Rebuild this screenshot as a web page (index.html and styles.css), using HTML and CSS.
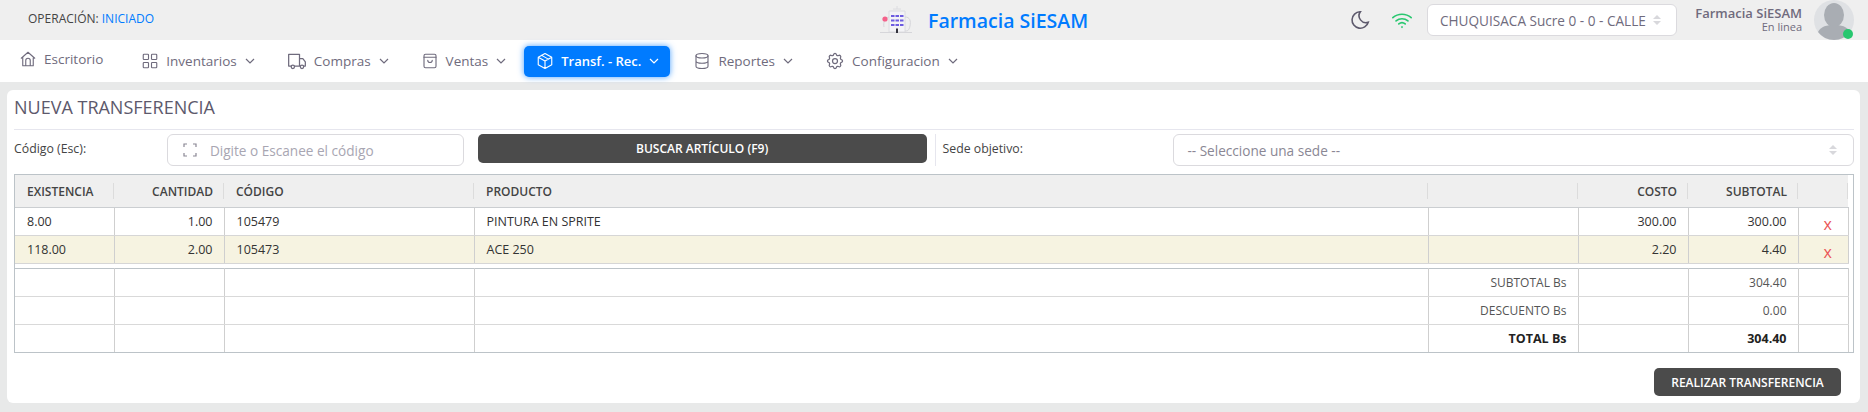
FILE: index.html
```html
<!DOCTYPE html>
<html lang="es">
<head>
    <meta charset="UTF-8">
    <title>Nueva Transferencia</title>
    <link rel="stylesheet" href="styles.css">
</head>
<body>
    <header class="topbar">
        <div class="operation">OPERACIÓN: <span class="operation-state">INICIADO</span></div>
        <div class="brand">
            <svg class="brand-logo" viewBox="0 0 32 28" width="32" height="28">
                <path d="M13 3h8M17 0v3M9 5h16v21H9z" fill="#f3f3f6" stroke="#dcdce0" stroke-width="1"/>
                <path d="M25 11c5 0 6 4 5 9s-3 5-5 5M9 11c-4 1-6 5-5 10" fill="none" stroke="#d6d6da" stroke-width="1"/>
                <path d="M0 26.500h32" stroke="#d6d6da" stroke-width="1"/>
                <circle cx="5" cy="13" r="2.600" fill="#f4618a"/>
                <g fill="#6d5ce0">
                    <rect x="11" y="9" width="3.500" height="2"/><rect x="15.500" y="9" width="3.500" height="2"/><rect x="20" y="9" width="3.500" height="2"/>
                    <rect x="11" y="13.500" width="3.500" height="2"/><rect x="15.500" y="13.500" width="3.500" height="2"/><rect x="20" y="13.500" width="3.500" height="2"/>
                    <rect x="11" y="18" width="3.500" height="2"/><rect x="15.500" y="18" width="3.500" height="2"/><rect x="20" y="18" width="3.500" height="2"/>
                </g>
                <rect x="16" y="22.500" width="2" height="4.500" fill="#33333d"/>
            </svg>
            <span class="brand-name">Farmacia SiESAM</span>
        </div>
        <div class="top-actions">
            <svg class="moon" viewBox="0 0 24 24" width="22" height="22"><path d="M12 3c.1 0 .3 0 .4 0a7.500 7.500 0 0 0 8.600 11.400A9 9 0 1 1 12 3z"/></svg>
            <svg class="wifi" viewBox="0 0 24 24" width="22" height="22">
                <path d="M2 9.500a15 15 0 0 1 20 0M5.500 13a10 10 0 0 1 13 0M8.500 16.200a5.500 5.500 0 0 1 7 0"/>
                <path d="M12 19.500v.5"/>
            </svg>
            <div class="branch-select">
                <span>CHUQUISACA Sucre 0 - 0 - CALLE</span>
                <svg class="updown" viewBox="0 0 10 12" width="10" height="12"><path d="M5 1l4 4H1zM5 11L1 7h8z"/></svg>
            </div>
            <div class="user">
                <div class="user-name">Farmacia SiESAM</div>
                <div class="user-state">En linea</div>
            </div>
            <div class="avatar">
                <svg viewBox="0 0 40 40" width="40" height="40">
                    <circle cx="20" cy="20" r="20" fill="#dfe1e4"/>
                    <ellipse cx="20" cy="15" rx="10" ry="12" fill="#a9adb3"/>
                    <path d="M4 32c3-6 9-7 16-7s13 1 16 7a20 20 0 0 1-32 0z" fill="#a9adb3"/>
                </svg>
                <span class="avatar-dot"></span>
            </div>
        </div>
    </header>

    <nav class="navbar">
        <a class="nav-item nav-home">
            <svg class="nav-icon" viewBox="0 0 24 24" width="18" height="18"><path d="M3 11l9-8 9 8M5 9v12h14V9M9 21v-7a3 3 0 0 1 6 0v7"/></svg>
            Escritorio
        </a>
        <a class="nav-item">
            <svg class="nav-icon" viewBox="0 0 24 24" width="18" height="18"><rect x="3" y="3" width="7" height="7" rx="1"/><rect x="14" y="3" width="7" height="7" rx="1"/><rect x="3" y="14" width="7" height="7" rx="1"/><rect x="14" y="14" width="7" height="7" rx="1"/></svg>
            Inventarios
            <svg class="chevron" viewBox="0 0 12 12" width="12" height="12"><path d="M2 4l4 4 4-4"/></svg>
        </a>
        <a class="nav-item">
            <svg class="nav-icon" viewBox="0 0 24 24" width="20" height="20"><path d="M5 18H2V4h13v14H9M15 9h4l3 4v5h-2M15 18h1"/><circle cx="7" cy="19" r="2"/><circle cx="18" cy="19" r="2"/></svg>
            Compras
            <svg class="chevron" viewBox="0 0 12 12" width="12" height="12"><path d="M2 4l4 4 4-4"/></svg>
        </a>
        <a class="nav-item">
            <svg class="nav-icon" viewBox="0 0 24 24" width="18" height="18"><rect x="4" y="3" width="16" height="18" rx="2"/><path d="M4 7h16M9 11a3 3 0 0 0 6 0"/></svg>
            Ventas
            <svg class="chevron" viewBox="0 0 12 12" width="12" height="12"><path d="M2 4l4 4 4-4"/></svg>
        </a>
        <a class="nav-item nav-active">
            <svg class="nav-icon" viewBox="0 0 24 24" width="18" height="18"><path d="M12 2l9 5v10l-9 5-9-5V7zM3 7l9 5 9-5M12 12v10M7.500 4.500l9 5"/></svg>
            Transf. - Rec.
            <svg class="chevron" viewBox="0 0 12 12" width="12" height="12"><path d="M2 4l4 4 4-4"/></svg>
        </a>
        <a class="nav-item">
            <svg class="nav-icon" viewBox="0 0 24 24" width="18" height="18"><ellipse cx="12" cy="5" rx="8" ry="3"/><path d="M4 5v14c0 1.700 3.600 3 8 3s8-1.300 8-3V5M4 12c0 1.700 3.600 3 8 3s8-1.300 8-3"/></svg>
            Reportes
            <svg class="chevron" viewBox="0 0 12 12" width="12" height="12"><path d="M2 4l4 4 4-4"/></svg>
        </a>
        <a class="nav-item">
            <svg class="nav-icon" viewBox="0 0 24 24" width="20" height="20"><circle cx="12" cy="12" r="3"/><path d="M10.300 4.300c.4-1.800 3-1.800 3.400 0a1.700 1.700 0 0 0 2.600 1.100c1.500-.9 3.300.8 2.400 2.400a1.700 1.700 0 0 0 1 2.500c1.800.4 1.800 3 0 3.400a1.700 1.700 0 0 0-1 2.600c.9 1.500-.9 3.300-2.400 2.400a1.700 1.700 0 0 0-2.600 1c-.4 1.800-3 1.800-3.400 0a1.700 1.700 0 0 0-2.600-1c-1.500.9-3.300-.9-2.400-2.400a1.700 1.700 0 0 0-1-2.600c-1.800-.4-1.800-3 0-3.400a1.700 1.700 0 0 0 1-2.500c-.9-1.600.9-3.300 2.400-2.400a1.700 1.700 0 0 0 2.600-1.100z"/></svg>
            Configuracion
            <svg class="chevron" viewBox="0 0 12 12" width="12" height="12"><path d="M2 4l4 4 4-4"/></svg>
        </a>
    </nav>

    <main class="card">
        <h1 class="card-title">NUEVA TRANSFERENCIA</h1>
        <div class="search-row">
            <label class="field-label code-label">Código (Esc):</label>
            <div class="code-input">
                <svg class="scan" viewBox="0 0 14 14" width="14" height="14"><path d="M1 4V1h3M10 1h3v3M13 10v3h-3M4 13H1v-3"/></svg>
                <span>Digite o Escanee el código</span>
            </div>
            <button class="btn-dark btn-search">BUSCAR ARTÍCULO (F9)</button>
            <label class="field-label sede-label">Sede objetivo:</label>
            <div class="sede-select">
                <span>-- Seleccione una sede --</span>
                <svg class="updown" viewBox="0 0 10 12" width="10" height="12"><path d="M5 1l4 4H1zM5 11L1 7h8z"/></svg>
            </div>
        </div>

        <div class="table-box">
            <table class="grid grid-items">
                <colgroup>
                    <col class="c-stock"><col class="c-qty"><col class="c-code"><col class="c-name"><col class="c-blank"><col class="c-cost"><col class="c-sub"><col class="c-del">
                </colgroup>
                <thead>
                    <tr>
                        <th>EXISTENCIA</th>
                        <th class="num">CANTIDAD</th>
                        <th>CÓDIGO</th>
                        <th>PRODUCTO</th>
                        <th></th>
                        <th class="num">COSTO</th>
                        <th class="num">SUBTOTAL</th>
                        <th></th>
                    </tr>
                </thead>
                <tbody>
                    <tr>
                        <td>8.00</td>
                        <td class="num">1.00</td>
                        <td>105479</td>
                        <td>PINTURA EN SPRITE</td>
                        <td></td>
                        <td class="num">300.00</td>
                        <td class="num">300.00</td>
                        <td class="del">x</td>
                    </tr>
                    <tr class="row-picked">
                        <td>118.00</td>
                        <td class="num">2.00</td>
                        <td>105473</td>
                        <td>ACE 250</td>
                        <td></td>
                        <td class="num">2.20</td>
                        <td class="num">4.40</td>
                        <td class="del">x</td>
                    </tr>
                </tbody>
            </table>
            <table class="grid grid-totals">
                <colgroup>
                    <col class="c-stock"><col class="c-qty"><col class="c-code"><col class="c-name"><col class="c-blank"><col class="c-cost"><col class="c-sub"><col class="c-del">
                </colgroup>
                <tbody>
                    <tr>
                        <td></td><td></td><td></td><td></td>
                        <td class="num">SUBTOTAL Bs</td>
                        <td></td>
                        <td class="num">304.40</td>
                        <td></td>
                    </tr>
                    <tr>
                        <td></td><td></td><td></td><td></td>
                        <td class="num">DESCUENTO Bs</td>
                        <td></td>
                        <td class="num">0.00</td>
                        <td></td>
                    </tr>
                    <tr class="row-total">
                        <td></td><td></td><td></td><td></td>
                        <td class="num">TOTAL Bs</td>
                        <td></td>
                        <td class="num">304.40</td>
                        <td></td>
                    </tr>
                </tbody>
            </table>
        </div>

        <div class="card-footer">
            <button class="btn-dark btn-submit">REALIZAR TRANSFERENCIA</button>
        </div>
    </main>
</body>
</html>
```

FILE: styles.css
```css
* {
    box-sizing: border-box;
}

body {
    margin: 0;
    height: 412px;
    overflow: hidden;
    background: #e8e9e9;
    font-family: 'Open Sans', 'Noto Sans', sans-serif;
    font-size: 12px;
    color: #5d596c;
}

/* top bar */
.topbar {
    display: flex;
    align-items: center;
    height: 40px;
    background: #efefef;
}
.operation {
    width: 880px;
    padding-left: 28px;
    font-size: 12px;
    color: #444;
    margin-top: -4px;
}
.operation-state { color: #007bff; }
.brand {
    display: flex;
    align-items: center;
    gap: 16px;
}
.brand-name {
    font-size: 19.500px;
    font-weight: 600;
    color: #007bff;
}
.top-actions {
    display: flex;
    align-items: center;
    margin-left: auto;
    padding-right: 14px;
}
.moon {
    fill: none;
    stroke: #5d596c;
    stroke-width: 1.700;
    margin-right: 20px;
}
.wifi {
    fill: none;
    stroke: #28c76f;
    stroke-width: 1.800;
    stroke-linecap: round;
    margin-right: 14px;
}
.branch-select {
    display: flex;
    align-items: center;
    justify-content: space-between;
    width: 250px;
    height: 32px;
    padding: 0 14px 0 12px;
    background: #fff;
    border: 1px solid #dbdade;
    border-radius: 6px;
    font-size: 13.600px;
    color: #6f6b7d;
}
.updown { fill: #d8d8dc; }
.user {
    width: 125px;
    text-align: right;
    color: #6f6b7d;
    line-height: 13px;
}
.user-name { font-weight: 600; font-size: 13px; }
.user-state { font-size: 11px; }
.avatar {
    position: relative;
    width: 40px;
    height: 40px;
    margin-left: 12px;
}
.avatar-dot {
    position: absolute;
    right: 1px;
    bottom: 1px;
    width: 10px;
    height: 10px;
    border-radius: 50%;
    background: #28c76f;
}

/* menu */
.navbar {
    display: flex;
    align-items: center;
    height: 42px;
    padding-left: 5px;
    background: #fff;
}
.nav-item {
    display: flex;
    align-items: center;
    gap: 7px;
    height: 31px;
    padding: 0 11px 0 14px;
    margin-right: 6px;
    font-size: 13.500px;
    font-weight: 500;
    color: #6f6b7d;
}
.nav-icon {
    fill: none;
    stroke: currentColor;
    stroke-width: 1.500;
    stroke-linecap: round;
    stroke-linejoin: round;
}
.chevron {
    fill: none;
    stroke: currentColor;
    stroke-width: 1.200;
}
.nav-home { margin-top: -4px; margin-right: 13px; }
.nav-active {
    padding: 0 10px 0 12px;
    background: #007bff;
    color: #fff;
    font-size: 13px;
    font-weight: 600;
    border-radius: 5px;
    box-shadow: 0 0 6px rgba(0, 123, 255, 0.7);
    margin-right: 9px;
}

/* card */
.card {
    width: 1853px;
    height: 313px;
    margin: 8px 0 0 7px;
    padding: 0 6px 0 7px;
    background: #fff;
    border-radius: 6px;
}
.card-title {
    margin: 0;
    height: 40px;
    padding-top: 5px;
    border-bottom: 1px solid #e6e6ee;
    font-size: 18px;
    font-weight: 400;
    color: #5d596c;
}
.search-row {
    display: flex;
    align-items: flex-start;
    padding-top: 4px;
    height: 44px;
}
.field-label {
    font-size: 12.300px;
    color: #444;
    padding-top: 6px;
}
.code-label { width: 153px; }
.code-input {
    display: flex;
    align-items: center;
    gap: 13px;
    width: 297px;
    height: 32px;
    padding-left: 15px;
    border: 1px solid #dbdade;
    border-radius: 6px;
    font-size: 13.600px;
    color: #a8a6b2;
}
.scan {
    fill: none;
    stroke: #8a8794;
    stroke-width: 1.200;
}
.btn-dark {
    border: none;
    border-radius: 5px;
    background: #4b4b4b;
    color: #fff;
    font-family: inherit;
    font-size: 12px;
    font-weight: 600;
}
.btn-search {
    width: 449px;
    height: 29px;
    margin-left: 14px;
}
.sede-label {
    width: 239px;
    margin-left: 8px;
    padding-left: 7px;
    border-left: 1px solid #e6e6ee;
    height: 32px;
}
.sede-select {
    display: flex;
    align-items: center;
    justify-content: space-between;
    width: 681px;
    height: 32px;
    padding: 0 15px 0 13px;
    border: 1px solid #dbdade;
    border-radius: 6px;
    font-size: 13.600px;
    color: #8a8794;
}

/* tables */
.table-box {
    width: 1840px;
    height: 179px;
    border: 1.500px solid #bcc3c8;
}
.grid {
    width: 1833px;
    border-collapse: collapse;
    table-layout: fixed;
    font-size: 12.500px;
    color: #333;
}
.c-stock { width: 99px; }
.c-qty { width: 110px; }
.c-code { width: 250px; }
.c-name { width: 954px; }
.c-blank { width: 150px; }
.c-cost { width: 110px; }
.c-sub { width: 110px; }
.c-del { width: 50px; }
.grid th,
.grid td {
    padding: 1px 11px 0 12px;
    text-align: left;
    border-right: 1px solid #cfcfcf;
}
.grid .num { text-align: right; }
.grid th {
    position: relative;
    height: 32px;
    background: #efefef;
    border-right: none;
    border-bottom: 1.500px solid #cbced1;
    font-size: 12px;
    font-weight: 600;
    color: #444;
}
.grid th::after {
    content: "";
    position: absolute;
    right: 0;
    top: 8px;
    bottom: 8px;
    width: 1px;
    background: #dcdcdc;
}
.grid-items td {
    height: 28px;
    border-bottom: 1.500px solid #d6d6d6;
}
.grid-items .row-picked td { background: #f6f3e1; }
.grid .del {
    padding: 5px 0 0 25px;
    font-size: 16px;
    color: #ea5455;
}
.grid-totals {
    margin-top: 4px;
    border-top: 1.500px solid #bcc3c8;
}
.grid-totals td {
    height: 28px;
    border-bottom: 1.500px solid #d9d9d9;
    font-size: 12px;
    color: #555;
}
.grid-totals .row-total td {
    border-bottom: none;
    font-weight: 700;
    font-size: 12.500px;
    color: #222;
}

.card-footer {
    display: flex;
    justify-content: flex-end;
    padding: 15px 13px 0 0;
}
.btn-submit {
    width: 187px;
    height: 28px;
}
```
